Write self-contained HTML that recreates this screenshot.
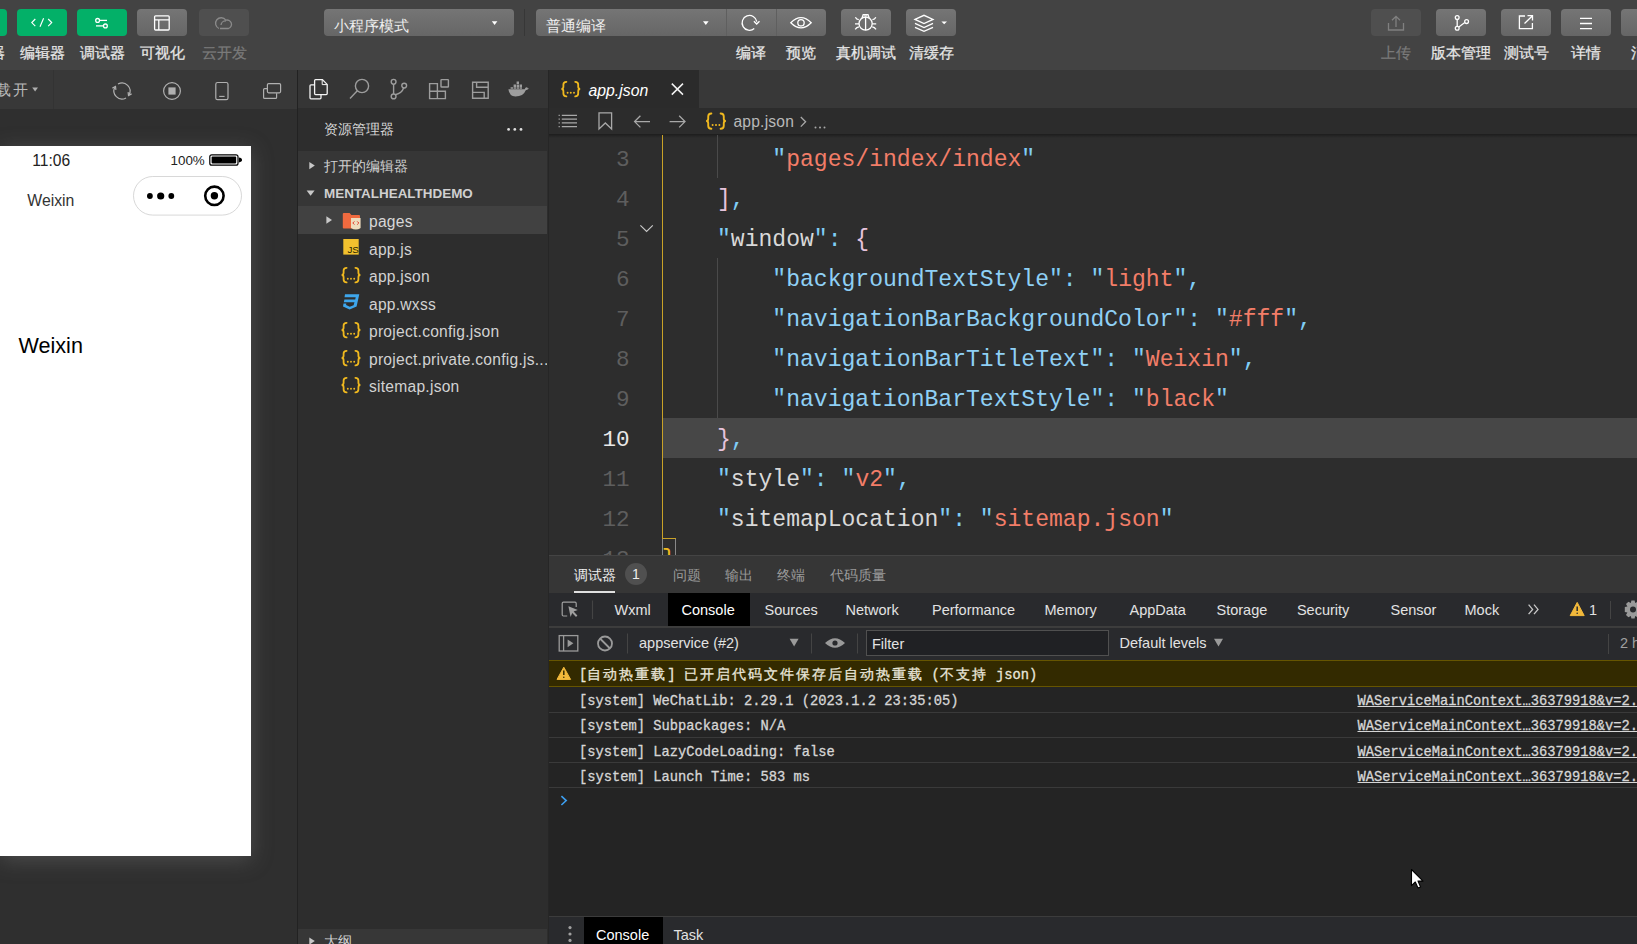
<!DOCTYPE html>
<html><head><meta charset="utf-8">
<style>
*{box-sizing:border-box;margin:0;padding:0}
html,body{width:1637px;height:944px;overflow:hidden;background:#2d2d2d;font-family:"Liberation Sans",sans-serif;color:#ccc}
.a{position:absolute}
.mono{font-family:"Liberation Mono",monospace}
#top{left:0;top:0;width:1637px;height:70px;background:#434343}
.btn{position:absolute;top:9px;width:50px;height:27px;border-radius:4px;background:linear-gradient(#757575,#666)}
.btn.g{background:#03b068}
.btn.dis{background:#4f4f4f}
.lbl{position:absolute;top:43px;font-size:15px;line-height:20px;color:#e6e6e6;white-space:nowrap;transform:translateX(-50%);-webkit-text-stroke:0.25px currentColor}
.lbl.dis{color:#7a7a7a}
svg{position:absolute;overflow:visible}
.cj{font-size:14.4px;letter-spacing:2px}
.fw{display:inline-block;width:16px}
.b{-webkit-text-stroke:0.3px currentColor}
</style></head><body>
<div id="top" class="a">
<div class="btn g" style="left:-43px"></div>
<div class="btn g" style="left:17px"></div>
<div class="btn g" style="left:77px"></div>
<div class="btn" style="left:137px"></div>
<div class="btn dis" style="left:199px"></div>
<div class="lbl" style="left:-18px">模拟器</div>
<div class="lbl" style="left:42px">编辑器</div>
<div class="lbl" style="left:102px">调试器</div>
<div class="lbl" style="left:162px">可视化</div>
<div class="lbl dis" style="left:224px">云开发</div>
<svg style="left:0;top:0" width="1637" height="70" viewBox="0 0 1637 70" fill="none" stroke="#fff" stroke-width="1.3">
 <!-- code icon -->
 <path stroke-width="1.15" d="M35.3 19 L31.8 22.6 L35.3 26.2 M48.2 19 L51.7 22.6 L48.2 26.2 M43.6 18.3 L40 26.8"/>
 <!-- sliders -->
 <circle cx="97.6" cy="20.4" r="1.9"/><path d="M99.6 20.4 H107"/>
 <circle cx="105.4" cy="25.9" r="1.9"/><path d="M96 25.9 H103.4"/>
 <!-- layout -->
 <rect x="154.6" y="15.8" width="14.6" height="14.2" rx="1"/><path d="M154.6 19.8 H169.2 M158.8 19.8 V30"/>
 <!-- cloud -->
 <g stroke="#8a8a8a"><path d="M219 28.5 A5.6 5.6 0 1 1 225.8 20.2 A4.3 4.3 0 1 1 228.5 28.5 H220"/><path d="M226 21 A4.6 4.6 0 0 0 221 25"/></g>
</svg>
<div class="btn" style="left:324px;width:190px"></div>
<div class="a" style="left:334px;top:16px;font-size:15px;line-height:20px;color:#eee">小程序模式</div>
<svg style="left:0;top:0" width="600" height="40"><path d="M491.8 21.2 H497.4 L494.6 25 Z" fill="#fff"/></svg>
<div class="a" style="left:524px;top:9px;width:1px;height:27px;background:#373737"></div>
<div class="btn" style="left:536px;width:290px"></div>
<div class="a" style="left:726px;top:9px;width:1px;height:27px;background:#5f5f5f"></div>
<div class="a" style="left:776px;top:9px;width:1px;height:27px;background:#5f5f5f"></div>
<div class="a" style="left:546px;top:16px;font-size:15px;line-height:20px;color:#eee">普通编译</div>
<svg style="left:0;top:0" width="800" height="40"><path d="M703 21.2 H708.6 L705.8 25 Z" fill="#fff"/></svg>
<div class="btn" style="left:841px"></div>
<div class="btn" style="left:906px"></div>
<div class="lbl" style="left:751px">编译</div>
<div class="lbl" style="left:801px">预览</div>
<div class="lbl" style="left:866px">真机调试</div>
<div class="lbl" style="left:931px">清缓存</div>
<svg style="left:0;top:0" width="1637" height="70" viewBox="0 0 1637 70" fill="none" stroke="#fff" stroke-width="1.3">
 <!-- refresh -->
 <path d="M754.26 28.57 A7.4 7.4 0 1 1 756.8 21.6"/><path d="M753.9 21.2 L756.7 24 L759.5 21.2"/>
 <!-- eye -->
 <path d="M790.8 22.8 Q801 12.5 811.2 22.8 Q801 33 790.8 22.8 Z"/><circle cx="801" cy="22.8" r="3.2"/>
 <!-- bug -->
 <circle cx="865.6" cy="23.6" r="6.6"/><path d="M865.6 17 V30.2"/>
 <path d="M862 18 L863.2 14.6 H868 L869.2 18"/><ellipse cx="865.6" cy="15.6" rx="1.2" ry="0.5" stroke-width="0.8"/>
 <path d="M855.4 17.2 Q856.4 19.4 858.8 19.6 M875.8 17.2 Q874.8 19.4 872.4 19.6 M855 23.8 H859 M876.2 23.8 H872.2 M855.2 29.4 Q856.6 27 859 26.8 M876 29.4 Q874.6 27 872.2 26.8"/>
 <!-- layers -->
 <path d="M915 19.4 L924 15.3 L933 19.4 L924 23.5 Z"/><path d="M915 23.4 L924 27.5 L933 23.4 M915 27.3 L924 31.4 L933 27.3"/>
</svg>
<svg style="left:0;top:0" width="1000" height="40"><path d="M941.4 21.4 H947 L944.2 24.2 Z" fill="#fff"/></svg>
<div class="btn dis" style="left:1371px"></div>
<div class="btn" style="left:1436px"></div>
<div class="btn" style="left:1501px"></div>
<div class="btn" style="left:1561px"></div>
<div class="btn" style="left:1621px"></div>
<div class="lbl dis" style="left:1396px">上传</div>
<div class="lbl" style="left:1461px">版本管理</div>
<div class="lbl" style="left:1526px">测试号</div>
<div class="lbl" style="left:1586px">详情</div>
<div class="lbl" style="left:1646px">消息</div>
<svg style="left:0;top:0" width="1637" height="70" viewBox="0 0 1637 70" fill="none" stroke="#fff" stroke-width="1.3">
 <g stroke="#808080"><path d="M1388.5 23 V30 H1403.5 V23"/><path d="M1396 27 V16.5 M1392 20.3 L1396 16.3 L1400 20.3"/></g>
 <circle cx="1457.2" cy="17.6" r="1.9"/><circle cx="1457.2" cy="28.3" r="1.9"/><circle cx="1466.6" cy="21.6" r="1.9"/>
 <path d="M1457.2 19.5 V26.4 M1464.8 22.6 L1458.8 27"/>
 <path d="M1525 16 H1519.4 V28.6 H1532.4 V23"/><path d="M1524.5 23.5 L1532.5 15.7 M1527.5 15.7 H1532.5 V20.6"/>
 <path d="M1580 18.3 H1592 M1580 23.5 H1592 M1580 28.6 H1592"/>
</svg>
</div>
<!-- simulator -->
<div class="a" style="left:0;top:70px;width:297px;height:39px;background:#383838"></div>
<div class="a" style="left:0;top:109px;width:297px;height:835px;background:#2f2f2f"></div>
<div class="a" style="left:297px;top:70px;width:1px;height:874px;background:#222"></div>

<!-- simulator toolbar -->
<div class="a" style="left:-4px;top:80px;font-size:15px;line-height:20px;color:#b8b8b8;letter-spacing:2px">载开</div>
<svg style="left:0;top:70px" width="300" height="40" viewBox="0 70 300 40" fill="none" stroke="#b0b0b0" stroke-width="1.2">
 <path d="M32.2 87.6 H38 L35.1 91.4 Z" fill="#b0b0b0" stroke="none"/>
 <path d="M53.5 70 V109" stroke="#333" stroke-width="1"/>
 <path d="M118 84.07 A8 8 0 0 1 128.93 95"/><path d="M126 97.93 A8 8 0 0 1 115.07 87"/>
 <path d="M131.6 93.9 L128.5 95.6 L128.1 92.1"/><path d="M112.4 88.1 L115.5 86.4 L115.9 89.9"/>
 <circle cx="172" cy="91" r="8.4"/><rect x="168.4" y="87.4" width="7.2" height="7.2" fill="#b0b0b0" stroke="none"/>
 <rect x="215.8" y="82.5" width="12.2" height="17.2" rx="1.8"/><path d="M219.2 96.4 H224.6" stroke-width="1.1"/>
 <rect x="267.4" y="83.6" width="13.2" height="9.2" rx="1.2"/><path d="M267 88.6 H264.6 Q263.6 88.6 263.6 89.6 V97.4 Q263.6 98.4 264.6 98.4 H275.6 Q276.6 98.4 276.6 97.4 V93.2"/>
</svg>
<!-- phone -->
<div class="a" style="left:0;top:146px;width:251px;height:710px;background:#fff;box-shadow:0 4px 20px rgba(125,125,125,0.38)"></div>
<div class="a" style="left:32.3px;top:150.5px;font-size:15.6px;line-height:20px;color:#222">11:06</div>
<div class="a" style="left:170.5px;top:152px;font-size:13.4px;line-height:18px;color:#222">100%</div>
<svg style="left:0;top:140px" width="260" height="90" viewBox="0 140 260 90">
 <rect x="209.8" y="154.8" width="28.2" height="10.4" rx="2" fill="none" stroke="#000" stroke-width="1.2"/>
 <rect x="211.6" y="156.6" width="24.6" height="6.8" rx="0.8" fill="#000"/>
 <path d="M238.8 157.6 Q242 158 242 160 Q242 162 238.8 162.4 Z" fill="#000"/>
 <rect x="133.5" y="176.5" width="108" height="38.6" rx="19.3" fill="#fff" stroke="#d8d8d8" stroke-width="1"/>
 <circle cx="149.9" cy="196" r="2.9" fill="#000"/><circle cx="160.7" cy="196" r="3.6" fill="#000"/><circle cx="171.3" cy="196" r="2.9" fill="#000"/>
 <circle cx="214.4" cy="195.8" r="9.2" fill="none" stroke="#000" stroke-width="2.6"/><circle cx="214.4" cy="195.8" r="3.7" fill="#000"/>
</svg>
<div class="a" style="left:27.3px;top:190.5px;font-size:15.8px;line-height:20px;color:#333">Weixin</div>
<div class="a" style="left:18.5px;top:333.5px;font-size:21.6px;line-height:24px;color:#000">Weixin</div>

<!-- explorer -->
<div class="a" style="left:298px;top:70px;width:250px;height:38px;background:#353535"></div>
<div class="a" style="left:298px;top:108px;width:250px;height:836px;background:#2d2d2d"></div>
<div class="a" style="left:548px;top:70px;width:1px;height:874px;background:#262626"></div>

<!-- explorer icons -->
<svg style="left:298px;top:70px" width="250" height="38" viewBox="298 70 250 38" fill="none" stroke="#9d9d9d" stroke-width="1.4">
 <g stroke="#f4f4f4" stroke-width="1.3"><path d="M314.6 84.8 H311 Q310 84.8 310 85.8 V97.8 Q310 98.8 311 98.8 H320 Q321 98.8 321 97.8 V94.8"/><path d="M315.6 79.6 H322.4 L327.2 84.4 V93.6 Q327.2 94.6 326.2 94.6 H315.6 Q314.6 94.6 314.6 93.6 V80.6 Q314.6 79.6 315.6 79.6 Z"/><path d="M322.2 79.8 V84.6 H327" stroke-width="1"/></g>
 <circle cx="362" cy="86" r="6.6"/><path d="M357.3 90.7 L350 98.4"/>
 <circle cx="393.6" cy="81.8" r="2.4"/><circle cx="393.6" cy="96.4" r="2.4"/><circle cx="404.2" cy="85.6" r="2.4"/><path d="M393.6 84.2 V94 M403.6 88 Q402 93 395.4 94.8"/>
 <path d="M429.6 83.6 H437.4 V98.6 H429.6 Z M429.6 91.2 H445.4 V98.6 H437.4"/><rect x="441" y="79.6" width="7.4" height="7.4" rx="0.6" fill="none"/>
 <path d="M472.6 82.2 H488.2 V98.2 H472.6 Z M476.6 82.2 V87.2 H488.2 M472.6 92.4 H484.2 V98.2"/>
</svg>
<svg style="left:298px;top:70px" width="250" height="38" viewBox="298 70 250 38">
 <path d="M508.4 89.2 H524.6 Q525.6 86.6 527.4 87.4 Q527.2 88.4 529 88.6 Q528 90 525.8 90.2 Q523.4 96.4 515.4 96.4 Q509.4 96.4 508.4 89.2 Z" fill="#9d9d9d"/>
 <path d="M516.6 81.6 h2.4 v2.4 h-2.4z M513.6 84.6 h2.4 v2.4 h-2.4z M516.6 84.6 h2.4 v2.4 h-2.4z M519.6 84.6 h2.4 v2.4 h-2.4z M510.6 87.2 h2.4 v1.6 h-2.4z M513.6 87.2 h2.4 v1.6 h-2.4z M516.6 87.2 h2.4 v1.6 h-2.4z M519.6 87.2 h2.4 v1.6 h-2.4z" fill="#9d9d9d"/>
</svg>
<div class="a" style="left:324px;top:120px;font-size:13.7px;line-height:20px;color:#d8d8d8">资源管理器</div>
<svg style="left:500px;top:120px" width="30" height="20" viewBox="500 120 30 20" fill="#ddd"><circle cx="508.6" cy="129.4" r="1.4"/><circle cx="514.8" cy="129.4" r="1.4"/><circle cx="521" cy="129.4" r="1.4"/></svg>
<div class="a" style="left:298px;top:151px;width:249px;height:55px;background:#363636"></div>
<div class="a" style="left:298px;top:206px;width:249px;height:27.5px;background:#414141"></div>
<svg style="left:298px;top:151px" width="250" height="90" viewBox="298 151 250 90" fill="#c8c8c8">
 <path d="M309.3 162 L314.8 165.6 L309.3 169.2 Z"/>
 <path d="M306.6 190.6 H314.6 L310.6 195.8 Z"/>
 <path d="M326.4 216.2 L332 220 L326.4 223.8 Z"/>
</svg>
<div class="a" style="left:324px;top:157px;font-size:13.7px;line-height:20px;color:#d0d0d0">打开的编辑器</div>
<div class="a" style="left:324px;top:183.5px;font-size:13.45px;line-height:20px;color:#d0d0d0;font-weight:bold">MENTALHEALTHDEMO</div>
<!-- file icons -->
<svg style="left:298px;top:206px" width="250" height="190" viewBox="298 206 250 190">
 <path d="M342.8 214 Q342.8 213 343.8 213 H349.6 L351.4 215 H359 Q360 215 360 216 V227.6 Q360 228.6 359 228.6 H343.8 Q342.8 228.6 342.8 227.6 Z" fill="#f06a3f"/>
 <path d="M351 218 H360.6 V228 Q355.8 231 351 228 Z" fill="#eedcbe"/>
 <path d="M354.4 221.4 L352.8 223 L354.4 224.6 M357.2 221.4 L358.8 223 L357.2 224.6" stroke="#e23b2c" stroke-width="1" fill="none"/>
 <rect x="343.3" y="239" width="15.4" height="15.6" fill="#f2c12e"/>
 <text x="347.4" y="253.4" font-family="Liberation Sans" font-size="9.8" fill="#2a2500">JS</text>
 <path d="M354 316 Q350.5 316 351.5 313 L352.6 308.6 Q353.2 306.6 355.6 306.6 H358.6 L359.4 303.6 H345.8" fill="none" stroke="#3e9fe6" stroke-width="0"/>
 <path d="M345 294.3 L359.3 294.3 L356.6 306.6 L349.6 309.6 L343 306.4 L343.5 303.6 L346.3 303.6 L346.1 305 L349.8 306.7 L353.6 305.2 L354.5 302.3 L343.8 302.3 L344.4 299.4 L355.2 299.4 L355.7 297.2 L344.5 297.2 Z" fill="#3ea6ec"/>
</svg>
<div class="a" style="left:369px;top:238.5px;width:177px;font-size:15.6px;line-height:22px;color:#d2d2d2;letter-spacing:0.25px;white-space:nowrap;overflow:hidden;text-overflow:ellipsis">app.js</div>
<div class="a" style="left:369px;top:265.5px;width:177px;font-size:15.6px;line-height:22px;color:#d2d2d2;letter-spacing:0.25px;white-space:nowrap;overflow:hidden;text-overflow:ellipsis">app.json</div>
<div class="a" style="left:369px;top:293.5px;width:177px;font-size:15.6px;line-height:22px;color:#d2d2d2;letter-spacing:0.25px;white-space:nowrap;overflow:hidden;text-overflow:ellipsis">app.wxss</div>
<div class="a" style="left:369px;top:320.5px;width:177px;font-size:15.6px;line-height:22px;color:#d2d2d2;letter-spacing:0.25px;white-space:nowrap;overflow:hidden;text-overflow:ellipsis">project.config.json</div>
<div class="a" style="left:369px;top:348.5px;width:178px;font-size:15.6px;line-height:22px;color:#d2d2d2;letter-spacing:0.25px;white-space:nowrap;overflow:hidden">project.private.config.js...</div>
<div class="a" style="left:369px;top:375.5px;width:177px;font-size:15.6px;line-height:22px;color:#d2d2d2;letter-spacing:0.25px;white-space:nowrap;overflow:hidden;text-overflow:ellipsis">sitemap.json</div>
<div class="a" style="left:369px;top:210.5px;font-size:15.6px;line-height:22px;color:#d8d8d8;letter-spacing:0.25px">pages</div>
<svg style="left:0;top:0" width="1" height="1" viewBox="0 0 1 1"><g transform="translate(0.00,0.20)" fill="none" stroke="#f0b91f" stroke-width="1.8" stroke-linecap="round"><path d="M346.6 267.6 Q343.6 267.6 343.6 270.4 V272.6 Q343.6 274.8 341.6 274.8 Q343.6 274.8 343.6 277 V279.4 Q343.6 282.2 346.6 282.2"/><path d="M355.4 267.6 Q358.4 267.6 358.4 270.4 V272.6 Q358.4 274.8 360.4 274.8 Q358.4 274.8 358.4 277 V279.4 Q358.4 282.2 355.4 282.2"/></g><g transform="translate(0.00,0.20)" fill="#f0b91f"><circle cx="347.8" cy="278.6" r="0.95"/><circle cx="351" cy="278.6" r="0.95"/><circle cx="354.2" cy="278.6" r="0.95"/></g></svg>
<svg style="left:0;top:0" width="1" height="1" viewBox="0 0 1 1"><g transform="translate(0.00,55.20)" fill="none" stroke="#f0b91f" stroke-width="1.8" stroke-linecap="round"><path d="M346.6 267.6 Q343.6 267.6 343.6 270.4 V272.6 Q343.6 274.8 341.6 274.8 Q343.6 274.8 343.6 277 V279.4 Q343.6 282.2 346.6 282.2"/><path d="M355.4 267.6 Q358.4 267.6 358.4 270.4 V272.6 Q358.4 274.8 360.4 274.8 Q358.4 274.8 358.4 277 V279.4 Q358.4 282.2 355.4 282.2"/></g><g transform="translate(0.00,55.20)" fill="#f0b91f"><circle cx="347.8" cy="278.6" r="0.95"/><circle cx="351" cy="278.6" r="0.95"/><circle cx="354.2" cy="278.6" r="0.95"/></g></svg>
<svg style="left:0;top:0" width="1" height="1" viewBox="0 0 1 1"><g transform="translate(0.00,83.20)" fill="none" stroke="#f0b91f" stroke-width="1.8" stroke-linecap="round"><path d="M346.6 267.6 Q343.6 267.6 343.6 270.4 V272.6 Q343.6 274.8 341.6 274.8 Q343.6 274.8 343.6 277 V279.4 Q343.6 282.2 346.6 282.2"/><path d="M355.4 267.6 Q358.4 267.6 358.4 270.4 V272.6 Q358.4 274.8 360.4 274.8 Q358.4 274.8 358.4 277 V279.4 Q358.4 282.2 355.4 282.2"/></g><g transform="translate(0.00,83.20)" fill="#f0b91f"><circle cx="347.8" cy="278.6" r="0.95"/><circle cx="351" cy="278.6" r="0.95"/><circle cx="354.2" cy="278.6" r="0.95"/></g></svg>
<svg style="left:0;top:0" width="1" height="1" viewBox="0 0 1 1"><g transform="translate(0.00,110.20)" fill="none" stroke="#f0b91f" stroke-width="1.8" stroke-linecap="round"><path d="M346.6 267.6 Q343.6 267.6 343.6 270.4 V272.6 Q343.6 274.8 341.6 274.8 Q343.6 274.8 343.6 277 V279.4 Q343.6 282.2 346.6 282.2"/><path d="M355.4 267.6 Q358.4 267.6 358.4 270.4 V272.6 Q358.4 274.8 360.4 274.8 Q358.4 274.8 358.4 277 V279.4 Q358.4 282.2 355.4 282.2"/></g><g transform="translate(0.00,110.20)" fill="#f0b91f"><circle cx="347.8" cy="278.6" r="0.95"/><circle cx="351" cy="278.6" r="0.95"/><circle cx="354.2" cy="278.6" r="0.95"/></g></svg>

<!-- editor -->
<div class="a" style="left:549px;top:70px;width:1088px;height:38px;background:#383838"></div>
<div class="a" style="left:549px;top:108px;width:1088px;height:27px;background:#2c2c2c"></div>
<div class="a" style="left:549px;top:135px;width:1088px;height:420px;background:#2d2d2d"></div>

<!-- editor tab -->
<div class="a" style="left:549px;top:70px;width:150px;height:38px;background:#2b2b2b"></div>
<svg style="left:0;top:0" width="1" height="1" viewBox="0 0 1 1"><g transform="translate(570.80,89.00) scale(1.0) translate(-351,-274.8)" fill="none" stroke="#f0b91f" stroke-width="1.8" stroke-linecap="round"><path d="M346.6 267.6 Q343.6 267.6 343.6 270.4 V272.6 Q343.6 274.8 341.6 274.8 Q343.6 274.8 343.6 277 V279.4 Q343.6 282.2 346.6 282.2"/><path d="M355.4 267.6 Q358.4 267.6 358.4 270.4 V272.6 Q358.4 274.8 360.4 274.8 Q358.4 274.8 358.4 277 V279.4 Q358.4 282.2 355.4 282.2"/></g><g transform="translate(570.80,89.00) scale(1.0) translate(-351,-274.8)" fill="#f0b91f"><circle cx="347.8" cy="278.6" r="0.95"/><circle cx="351" cy="278.6" r="0.95"/><circle cx="354.2" cy="278.6" r="0.95"/></g></svg>
<div class="a" style="left:588.5px;top:80px;font-size:15.8px;line-height:22px;color:#fff;font-style:italic">app.json</div>
<svg style="left:0;top:0" width="1" height="1" viewBox="0 0 1 1"><path d="M671.8 83.6 L683 94.6 M683 83.6 L671.8 94.6" stroke="#f2f2f2" stroke-width="1.5"/></svg>
<!-- breadcrumb -->
<div class="a" style="left:549px;top:134px;width:1088px;height:4px;background:linear-gradient(rgba(0,0,0,0.35),rgba(0,0,0,0))"></div>
<svg style="left:0;top:0" width="1" height="1" viewBox="0 0 1 1" fill="none" stroke="#a8a8a8" stroke-width="1.3">
 <path d="M561.8 115.4 H577 M561.8 119.1 H577 M561.8 122.9 H577 M561.8 126.6 H577"/>
 <path d="M558.6 115.4 H559.8 M558.6 119.1 H559.8 M558.6 122.9 H559.8 M558.6 126.6 H559.8"/>
 <path d="M599 112.8 H611.6 V129 L605.3 123 L599 129 Z"/>
 <path d="M650 121.6 H634.6 M640.4 115.8 L634.6 121.6 L640.4 127.4"/>
 <path d="M669.6 121.6 H685 M679.2 115.8 L685 121.6 L679.2 127.4"/>
 <path d="M800.8 117 L805.6 121.8 L800.8 126.6"/>
</svg>
<svg style="left:0;top:0" width="1" height="1" viewBox="0 0 1 1"><g transform="translate(716.00,121.00) scale(1.05) translate(-351,-274.8)" fill="none" stroke="#f0b91f" stroke-width="1.8" stroke-linecap="round"><path d="M346.6 267.6 Q343.6 267.6 343.6 270.4 V272.6 Q343.6 274.8 341.6 274.8 Q343.6 274.8 343.6 277 V279.4 Q343.6 282.2 346.6 282.2"/><path d="M355.4 267.6 Q358.4 267.6 358.4 270.4 V272.6 Q358.4 274.8 360.4 274.8 Q358.4 274.8 358.4 277 V279.4 Q358.4 282.2 355.4 282.2"/></g><g transform="translate(716.00,121.00) scale(1.05) translate(-351,-274.8)" fill="#f0b91f"><circle cx="347.8" cy="278.6" r="0.95"/><circle cx="351" cy="278.6" r="0.95"/><circle cx="354.2" cy="278.6" r="0.95"/></g></svg>
<div class="a" style="left:733.5px;top:112px;font-size:15.6px;line-height:20px;color:#b9b9b9;letter-spacing:0.2px">app.json</div>
<svg style="left:0;top:0" width="1" height="1" viewBox="0 0 1 1" fill="#a8a8a8"><circle cx="815.5" cy="127.4" r="1"/><circle cx="820" cy="127.4" r="1"/><circle cx="824.5" cy="127.4" r="1"/></svg>
<!-- code -->
<div class="a" style="left:549px;top:135px;width:1088px;height:420px;overflow:hidden">
 <div class="a" style="left:113px;top:283px;width:975px;height:40px;background:#474747"></div>
 <div class="a" style="left:113px;top:0;width:1px;height:403.5px;background:#c9a227"></div>
 <div class="a" style="left:113px;top:403px;width:14px;height:1px;background:#c9a227"></div>
 <div class="a" style="left:113px;top:403.5px;width:14px;height:20px;border:1px solid #888;border-top:none"></div>
 <div class="a" style="left:168px;top:0;width:1px;height:43px;background:#4a4a4a"></div>
 <div class="a" style="left:168px;top:123px;width:1px;height:160px;background:#4a4a4a"></div>
 <svg style="left:0;top:0" width="1" height="1" viewBox="549 135 1 1"><path d="M640.4 225.4 L646.6 231.4 L652.8 225.4" fill="none" stroke="#c8c8c8" stroke-width="1.2"/></svg>
 <div class="a mono" style="left:0;top:-35.5px;width:80.5px;height:40px;line-height:40px;font-size:22.6px;text-align:right;color:#5e5e5e">2</div>
 <div class="a mono" style="left:112.7px;top:-35px;height:40px;line-height:40px;font-size:23.05px;white-space:pre;color:#d4d4d4">    <span style="color:#80cdf5">"</span><span style="color:#d9d9d9">pages</span><span style="color:#80cdf5">"</span><span style="color:#80cdf5">: </span><span style="color:#e6c3dc">[</span></div>
 <div class="a mono" style="left:0;top:4.5px;width:80.5px;height:40px;line-height:40px;font-size:22.6px;text-align:right;color:#5e5e5e">3</div>
 <div class="a mono" style="left:112.7px;top:5px;height:40px;line-height:40px;font-size:23.05px;white-space:pre;color:#d4d4d4">        <span style="color:#80cdf5">"</span><span style="color:#f27d68">pages/index/index</span><span style="color:#80cdf5">"</span></div>
 <div class="a mono" style="left:0;top:44.5px;width:80.5px;height:40px;line-height:40px;font-size:22.6px;text-align:right;color:#5e5e5e">4</div>
 <div class="a mono" style="left:112.7px;top:45px;height:40px;line-height:40px;font-size:23.05px;white-space:pre;color:#d4d4d4">    <span style="color:#e6c3dc">]</span><span style="color:#80cdf5">,</span></div>
 <div class="a mono" style="left:0;top:84.5px;width:80.5px;height:40px;line-height:40px;font-size:22.6px;text-align:right;color:#5e5e5e">5</div>
 <div class="a mono" style="left:112.7px;top:85px;height:40px;line-height:40px;font-size:23.05px;white-space:pre;color:#d4d4d4">    <span style="color:#80cdf5">"</span><span style="color:#d9d9d9">window</span><span style="color:#80cdf5">"</span><span style="color:#80cdf5">: </span><span style="color:#e6c3dc">{</span></div>
 <div class="a mono" style="left:0;top:124.5px;width:80.5px;height:40px;line-height:40px;font-size:22.6px;text-align:right;color:#5e5e5e">6</div>
 <div class="a mono" style="left:112.7px;top:125px;height:40px;line-height:40px;font-size:23.05px;white-space:pre;color:#d4d4d4">        <span style="color:#80cdf5">"</span><span style="color:#8fd0f5">backgroundTextStyle</span><span style="color:#80cdf5">"</span><span style="color:#80cdf5">: </span><span style="color:#80cdf5">"</span><span style="color:#f27d68">light</span><span style="color:#80cdf5">"</span><span style="color:#80cdf5">,</span></div>
 <div class="a mono" style="left:0;top:164.5px;width:80.5px;height:40px;line-height:40px;font-size:22.6px;text-align:right;color:#5e5e5e">7</div>
 <div class="a mono" style="left:112.7px;top:165px;height:40px;line-height:40px;font-size:23.05px;white-space:pre;color:#d4d4d4">        <span style="color:#80cdf5">"</span><span style="color:#8fd0f5">navigationBarBackgroundColor</span><span style="color:#80cdf5">"</span><span style="color:#80cdf5">: </span><span style="color:#80cdf5">"</span><span style="color:#f27d68">#fff</span><span style="color:#80cdf5">"</span><span style="color:#80cdf5">,</span></div>
 <div class="a mono" style="left:0;top:204.5px;width:80.5px;height:40px;line-height:40px;font-size:22.6px;text-align:right;color:#5e5e5e">8</div>
 <div class="a mono" style="left:112.7px;top:205px;height:40px;line-height:40px;font-size:23.05px;white-space:pre;color:#d4d4d4">        <span style="color:#80cdf5">"</span><span style="color:#8fd0f5">navigationBarTitleText</span><span style="color:#80cdf5">"</span><span style="color:#80cdf5">: </span><span style="color:#80cdf5">"</span><span style="color:#f27d68">Weixin</span><span style="color:#80cdf5">"</span><span style="color:#80cdf5">,</span></div>
 <div class="a mono" style="left:0;top:244.5px;width:80.5px;height:40px;line-height:40px;font-size:22.6px;text-align:right;color:#5e5e5e">9</div>
 <div class="a mono" style="left:112.7px;top:245px;height:40px;line-height:40px;font-size:23.05px;white-space:pre;color:#d4d4d4">        <span style="color:#80cdf5">"</span><span style="color:#8fd0f5">navigationBarTextStyle</span><span style="color:#80cdf5">"</span><span style="color:#80cdf5">: </span><span style="color:#80cdf5">"</span><span style="color:#f27d68">black</span><span style="color:#80cdf5">"</span></div>
 <div class="a mono" style="left:0;top:284.5px;width:80.5px;height:40px;line-height:40px;font-size:22.6px;text-align:right;color:#e8e8e8">10</div>
 <div class="a mono" style="left:112.7px;top:285px;height:40px;line-height:40px;font-size:23.05px;white-space:pre;color:#d4d4d4">    <span style="color:#e6c3dc">}</span><span style="color:#80cdf5">,</span></div>
 <div class="a mono" style="left:0;top:324.5px;width:80.5px;height:40px;line-height:40px;font-size:22.6px;text-align:right;color:#5e5e5e">11</div>
 <div class="a mono" style="left:112.7px;top:325px;height:40px;line-height:40px;font-size:23.05px;white-space:pre;color:#d4d4d4">    <span style="color:#80cdf5">"</span><span style="color:#d9d9d9">style</span><span style="color:#80cdf5">"</span><span style="color:#80cdf5">: </span><span style="color:#80cdf5">"</span><span style="color:#f27d68">v2</span><span style="color:#80cdf5">"</span><span style="color:#80cdf5">,</span></div>
 <div class="a mono" style="left:0;top:364.5px;width:80.5px;height:40px;line-height:40px;font-size:22.6px;text-align:right;color:#5e5e5e">12</div>
 <div class="a mono" style="left:112.7px;top:365px;height:40px;line-height:40px;font-size:23.05px;white-space:pre;color:#d4d4d4">    <span style="color:#80cdf5">"</span><span style="color:#d9d9d9">sitemapLocation</span><span style="color:#80cdf5">"</span><span style="color:#80cdf5">: </span><span style="color:#80cdf5">"</span><span style="color:#f27d68">sitemap.json</span><span style="color:#80cdf5">"</span></div>
 <div class="a mono" style="left:0;top:404.5px;width:80.5px;height:40px;line-height:40px;font-size:22.6px;text-align:right;color:#5e5e5e">13</div>
 <div class="a mono" style="left:112.7px;top:405px;height:40px;line-height:40px;font-size:23.05px;white-space:pre;color:#d4d4d4"><span style="color:#f0b91f">}</span></div>

</div>

<!-- debugger -->
<div class="a" style="left:549px;top:555px;width:1088px;height:38px;background:#363636;border-top:1px solid #444"></div>
<div class="a" style="left:549px;top:593px;width:1088px;height:34px;background:#292a2d"></div>
<div class="a" style="left:549px;top:627px;width:1088px;height:33px;background:#292a2d;border-top:1px solid #3c3c3c"></div>
<div class="a" style="left:549px;top:660px;width:1088px;height:256px;background:#242424"></div>
<div class="a" style="left:549px;top:916px;width:1088px;height:28px;background:#292a2d;border-top:1px solid #3c3c3c"></div>

<!-- debugger header -->
<div class="a" style="left:573.5px;top:565px;font-size:14px;line-height:20px;color:#f0f0f0">调试器</div>
<div class="a" style="left:625px;top:563px;width:22px;height:22px;border-radius:11px;background:#505050;color:#eee;font-size:14px;line-height:22px;text-align:center">1</div>
<div class="a" style="left:574px;top:590.5px;width:41px;height:2px;background:#e0e0e0"></div>
<div class="a" style="left:672.5px;top:565px;font-size:14px;line-height:20px;color:#9a9a9a">问题</div>
<div class="a" style="left:725px;top:565px;font-size:14px;line-height:20px;color:#9a9a9a">输出</div>
<div class="a" style="left:777px;top:565px;font-size:14px;line-height:20px;color:#9a9a9a">终端</div>
<div class="a" style="left:830px;top:565px;font-size:14px;line-height:20px;color:#9a9a9a">代码质量</div>
<!-- devtools tabs -->
<div class="a" style="left:668px;top:593px;width:82px;height:33px;background:#000"></div>
<div class="a" style="left:549px;top:626px;width:1088px;height:1px;background:#3d3d3d"></div>
<svg style="left:0;top:0" width="1" height="1" viewBox="0 0 1 1" fill="none" stroke="#a0a0a0" stroke-width="1.2">
 <path d="M567.2 616 H563.4 Q562.2 616 562.2 614.8 V603.4 Q562.2 602.2 563.4 602.2 H575 Q576.2 602.2 576.2 603.4 V607"/><path d="M568.4 606.2 L577.8 610 L573.6 611.4 L577.4 615.6 L576 617 L572.2 613 L570.6 617 Z" fill="#a0a0a0" stroke="none"/>
 <path d="M592.5 600.5 V619" stroke="#444"/>
</svg>
<div class="a" style="left:614.5px;top:600px;font-size:14.5px;line-height:20px;color:#e2e2e2">Wxml</div>
<div class="a" style="left:681.5px;top:600px;font-size:14.5px;line-height:20px;color:#fff">Console</div>
<div class="a" style="left:764.5px;top:600px;font-size:14.5px;line-height:20px;color:#e2e2e2">Sources</div>
<div class="a" style="left:845.5px;top:600px;font-size:14.5px;line-height:20px;color:#e2e2e2">Network</div>
<div class="a" style="left:932.0px;top:600px;font-size:14.5px;line-height:20px;color:#e2e2e2">Performance</div>
<div class="a" style="left:1044.5px;top:600px;font-size:14.5px;line-height:20px;color:#e2e2e2">Memory</div>
<div class="a" style="left:1129.5px;top:600px;font-size:14.5px;line-height:20px;color:#e2e2e2">AppData</div>
<div class="a" style="left:1216.5px;top:600px;font-size:14.5px;line-height:20px;color:#e2e2e2">Storage</div>
<div class="a" style="left:1296.9px;top:600px;font-size:14.5px;line-height:20px;color:#e2e2e2">Security</div>
<div class="a" style="left:1390.5px;top:600px;font-size:14.5px;line-height:20px;color:#e2e2e2">Sensor</div>
<div class="a" style="left:1464.5px;top:600px;font-size:14.5px;line-height:20px;color:#e2e2e2">Mock</div>

<svg style="left:0;top:0" width="1" height="1" viewBox="0 0 1 1" fill="none" stroke="#c8c8c8" stroke-width="1.3">
 <path d="M1528.6 604.6 L1532.6 609.4 L1528.6 614.2 M1534 604.6 L1538 609.4 L1534 614.2"/>
 <path d="M1577.2 602.4 L1584.2 615.6 H1570.2 Z" fill="#f2b93b" stroke="#f2b93b" stroke-width="1" stroke-linejoin="round"/>
 <path d="M1577.2 606.4 V611" stroke="#292a2d" stroke-width="1.5"/><circle cx="1577.2" cy="613.3" r="0.8" fill="#292a2d" stroke="none"/>
 <path d="M1610.5 601 V619" stroke="#444" stroke-width="1"/>
</svg>
<div class="a" style="left:1589px;top:600px;font-size:14.5px;line-height:20px;color:#e2e2e2">1</div>
<svg style="left:0;top:0" width="1" height="1" viewBox="0 0 1 1"><g transform="translate(1633,609.5)"><path d="M-1.6 -9 H1.6 L2.2 -6.4 L4.6 -7.8 L7 -5.4 L5.6 -3 L8.2 -2.4 V2.4 L5.6 3 L7 5.4 L4.6 7.8 L2.2 6.4 L1.6 9 H-1.6 L-2.2 6.4 L-4.6 7.8 L-7 5.4 L-5.6 3 L-8.2 2.4 V-2.4 L-5.6 -3 L-7 -5.4 L-4.6 -7.8 L-2.2 -6.4 Z" fill="#9a9a9a"/><circle r="3" fill="#292a2d"/></g></svg>
<!-- console toolbar -->
<svg style="left:0;top:0" width="1" height="1" viewBox="0 0 1 1" fill="none" stroke="#9a9a9a" stroke-width="1.3">
 <rect x="559.2" y="635.6" width="18.6" height="15.4"/><path d="M563.6 635.6 V651"/><path d="M567.6 639.4 L573.4 643.3 L567.6 647.2 Z" fill="#9a9a9a" stroke="none"/>
 <circle cx="605" cy="643.5" r="7" stroke-width="1.8"/><path d="M600 638.5 L610 648.5" stroke-width="1.8"/>
 <path d="M627.5 633.5 V653.5 M811.5 633.5 V653.5 M857.5 633.5 V653.5 M1608.5 634 V654" stroke="#444" stroke-width="1"/>
 <path d="M789.6 638.8 H798.6 L794.1 646.6 Z" fill="#9a9a9a" stroke="none"/>
 <path d="M825 643 Q835 633.4 845 643 Q835 652.6 825 643 Z" fill="#9a9a9a" stroke="none"/><circle cx="835" cy="643" r="2.6" fill="#292a2d" stroke="none"/>
 <path d="M1214 638.8 H1223 L1218.5 646.6 Z" fill="#9a9a9a" stroke="none"/>
</svg>
<div class="a" style="left:639px;top:633px;font-size:14.5px;line-height:20px;color:#e2e2e2">appservice (#2)</div>
<div class="a" style="left:866px;top:630px;width:242.5px;height:25.5px;border:1px solid #505050;background:#202124"></div>
<div class="a" style="left:872px;top:634px;font-size:14.5px;line-height:20px;color:#e2e2e2">Filter</div>
<div class="a" style="left:1119.5px;top:633px;font-size:14.5px;line-height:20px;color:#e2e2e2">Default levels</div>
<div class="a" style="left:1620px;top:633px;font-size:14.5px;line-height:20px;color:#a0a0a0;white-space:nowrap">2 h</div>
<!-- warning row -->
<div class="a" style="left:549px;top:660px;width:1088px;height:27px;background:#332a00;border-top:1px solid #665500;border-bottom:1px solid #665500"></div>
<svg style="left:0;top:0" width="1" height="1" viewBox="0 0 1 1"><path d="M563.8 667.2 L570.6 679.4 H557 Z" fill="#f2b93b" stroke="#f2b93b" stroke-width="1" stroke-linejoin="round"/><path d="M563.8 670.6 V675" stroke="#332a00" stroke-width="1.5"/><circle cx="563.8" cy="677.2" r="0.8" fill="#332a00"/></svg>
<div class="a mono b" style="left:579px;top:665px;font-size:13.75px;line-height:20px;color:#e9e6da;white-space:pre">[<span class="cj">自动热重载</span>] <span class="cj">已开启代码文件保存后自动热重载</span><span class="fw" style="text-align:right">(</span><span class="cj">不支持</span> json<span class="fw">)</span></div>
<div class="a" style="left:549px;top:687.4px;width:1088px;height:25.2px;border-bottom:1px solid #3a3a3a"></div>
<div class="a mono b" style="left:579px;top:691.6px;font-size:13.75px;line-height:20px;color:#d6d6d6;white-space:pre">[system] WeChatLib: 2.29.1 (2023.1.2 23:35:05)</div>
<div class="a mono b" style="left:1357.5px;top:691.6px;font-size:13.75px;line-height:20px;color:#d6d6d6;white-space:pre;text-decoration:underline">WAServiceMainContext…36379918&amp;v=2.29.1</div>
<div class="a" style="left:549px;top:712.6px;width:1088px;height:25.2px;border-bottom:1px solid #3a3a3a"></div>
<div class="a mono b" style="left:579px;top:717.1px;font-size:13.75px;line-height:20px;color:#d6d6d6;white-space:pre">[system] Subpackages: N/A</div>
<div class="a mono b" style="left:1357.5px;top:717.1px;font-size:13.75px;line-height:20px;color:#d6d6d6;white-space:pre;text-decoration:underline">WAServiceMainContext…36379918&amp;v=2.29.1</div>
<div class="a" style="left:549px;top:737.8px;width:1088px;height:25.2px;border-bottom:1px solid #3a3a3a"></div>
<div class="a mono b" style="left:579px;top:742.6px;font-size:13.75px;line-height:20px;color:#d6d6d6;white-space:pre">[system] LazyCodeLoading: false</div>
<div class="a mono b" style="left:1357.5px;top:742.6px;font-size:13.75px;line-height:20px;color:#d6d6d6;white-space:pre;text-decoration:underline">WAServiceMainContext…36379918&amp;v=2.29.1</div>
<div class="a" style="left:549px;top:763.0px;width:1088px;height:25.2px;border-bottom:1px solid #3a3a3a"></div>
<div class="a mono b" style="left:579px;top:768.1px;font-size:13.75px;line-height:20px;color:#d6d6d6;white-space:pre">[system] Launch Time: 583 ms</div>
<div class="a mono b" style="left:1357.5px;top:768.1px;font-size:13.75px;line-height:20px;color:#d6d6d6;white-space:pre;text-decoration:underline">WAServiceMainContext…36379918&amp;v=2.29.1</div>

<svg style="left:0;top:0" width="1" height="1" viewBox="0 0 1 1"><path d="M561.4 796.2 L566.2 800.6 L561.4 805" fill="none" stroke="#3d9ff0" stroke-width="1.6"/></svg>
<!-- drawer -->
<div class="a" style="left:584px;top:917px;width:78.5px;height:27px;background:#000"></div>
<svg style="left:0;top:0" width="1" height="1" viewBox="0 0 1 1" fill="#a0a0a0"><circle cx="570" cy="927.6" r="1.6"/><circle cx="570" cy="934" r="1.6"/><circle cx="570" cy="940.4" r="1.6"/></svg>
<div class="a" style="left:596px;top:925px;font-size:14.5px;line-height:20px;color:#fff">Console</div>
<div class="a" style="left:673.5px;top:925px;font-size:14.5px;line-height:20px;color:#e2e2e2">Task</div>
<!-- outline section -->
<div class="a" style="left:298px;top:929px;width:249px;height:15px;background:#373737"></div>
<svg style="left:0;top:0" width="1" height="1" viewBox="0 0 1 1" fill="#c8c8c8"><path d="M309.3 937.5 L314.8 941.1 L309.3 944.7 Z"/></svg>
<div class="a" style="left:324px;top:931.5px;font-size:13.7px;line-height:20px;color:#d0d0d0">大纲</div>
<!-- cursor -->
<svg style="left:0;top:0" width="1" height="1" viewBox="0 0 1 1"><path d="M1411.5 869.5 V885.6 L1415.3 882 L1418 888 L1420.6 886.9 L1418 881.1 L1423 881.1 Z" fill="#fff" stroke="#000" stroke-width="1.1" stroke-linejoin="round"/></svg>
</body></html>
